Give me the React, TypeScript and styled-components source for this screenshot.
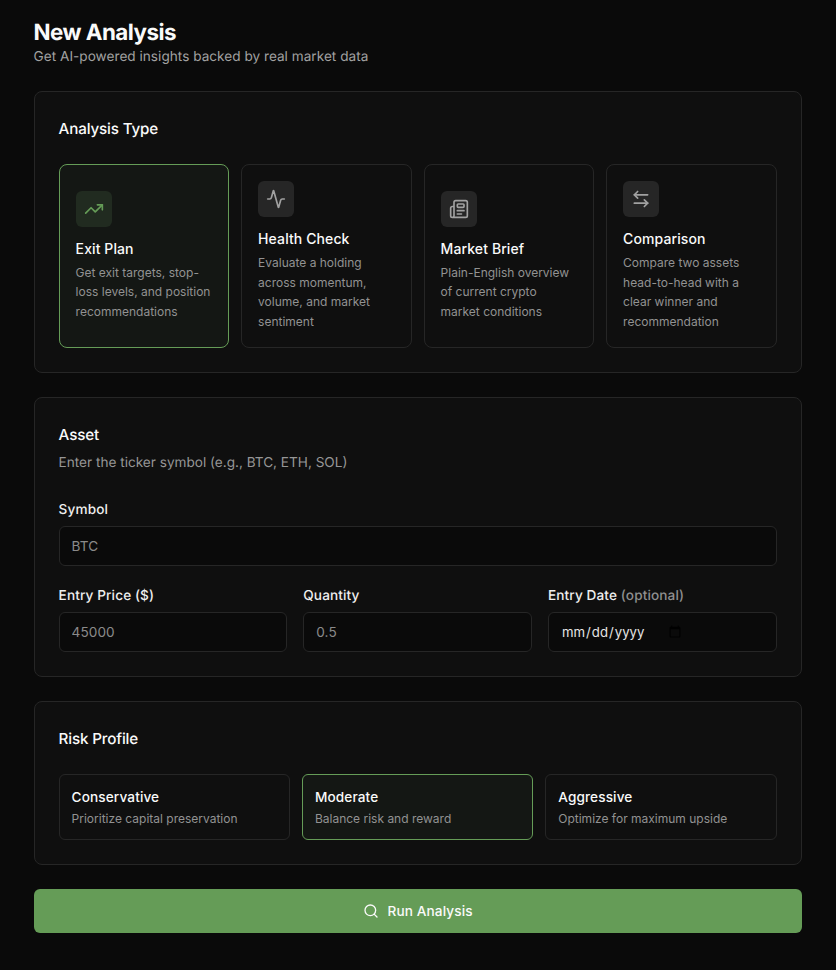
import React, { useState } from 'react';
import styled, { createGlobalStyle } from 'styled-components';
import { TrendingUp, Activity, Newspaper, ArrowLeftRight, Search } from 'lucide-react';

const GlobalStyle = createGlobalStyle`
  * { box-sizing: border-box; }
  html, body { margin: 0; background: #0a0a0a; }
  body {
    font-family: Inter, "Noto Sans", sans-serif;
    color: #fafafa;
    -webkit-font-smoothing: antialiased;
    text-rendering: geometricPrecision;
  }
`;

const Page = styled.main`
  padding: 19px 34.4px 37px 33.6px;
  display: flex;
  flex-direction: column;
  gap: 24px;
`;

const Header = styled.header`
  display: flex;
  flex-direction: column;
  gap: 1px;
`;

const Title = styled.h1`
  margin: 0;
  font-size: 22.4px;
  line-height: 28px;
  font-weight: 700;
  letter-spacing: -0.56px;
  color: #fafafa;
`;

const Subtitle = styled.p`
  margin: 0;
  font-size: 13.6px;
  line-height: 19px;
  letter-spacing: 0.02px;
  color: #a1a1a1;
`;

const Panel = styled.section`
  background: #0f0f0f;
  border: 1px solid #262626;
  border-radius: 8px;
  padding: 24px;
`;

const PanelTitle = styled.h2`
  margin: 0 0 -2px;
  font-size: 15.2px;
  line-height: 25px;
  font-weight: 500;
  letter-spacing: -0.15px;
  color: #fafafa;
  padding-bottom: 1px;
`;

const PanelHint = styled.p`
  margin: 7px 0 -1px;
  font-size: 13.6px;
  line-height: 20px;
  color: #969696;
`;

const TypeGrid = styled.div`
  margin-top: 24px;
  display: grid;
  grid-template-columns: repeat(4, 1fr);
  gap: 12px;
`;

const TypeCard = styled.button<{ $active?: boolean }>`
  display: flex;
  flex-direction: column;
  justify-content: center;
  align-items: flex-start;
  height: 184px;
  padding: 16px;
  text-align: left;
  font-family: inherit;
  cursor: pointer;
  border-radius: 8px;
  border: 1px solid ${(p) => (p.$active ? '#659c57' : '#262626')};
  background: ${(p) => (p.$active ? '#141714' : 'transparent')};
`;

const IconBox = styled.span<{ $active?: boolean }>`
  width: 36px;
  height: 36px;
  border-radius: 6px;
  display: flex;
  align-items: center;
  justify-content: center;
  margin-bottom: 12px;
  background: ${(p) => (p.$active ? '#212b20' : '#262626')};
  color: ${(p) => (p.$active ? '#659c57' : '#a1a1a1')};
`;

const CardTitle = styled.span`
  font-size: 14px;
  line-height: 20px;
  font-weight: 500;
  letter-spacing: 0.1px;
  color: #fafafa;
`;

const CardText = styled.span`
  margin-top: 4px;
  font-size: 12px;
  line-height: 19.5px;
  color: #929292;
`;

const FieldRow = styled.div`
  margin-top: 19px;
  display: grid;
  grid-template-columns: repeat(3, 1fr);
  gap: 16px;
`;

const Field = styled.label<{ $top?: boolean }>`
  display: flex;
  flex-direction: column;
  gap: 5px;
  margin-top: ${(p) => (p.$top ? '27px' : '0')};
`;

const FieldLabel = styled.span`
  font-size: 13.6px;
  line-height: 22px;
  font-weight: 450;
  letter-spacing: 0.12px;
  color: #f0f0f0;
`;

const Optional = styled.span`
  color: #8f8f8f;
`;

const Input = styled.input`
  width: 100%;
  height: 40px;
  padding: 0 12px;
  font-family: inherit;
  font-size: 13.6px;
  letter-spacing: 0.08px;
  color: #e5e5e5;
  background: #0a0a0a;
  border: 1px solid #262626;
  border-radius: 6px;
  outline: none;
  &::placeholder { color: #8a8a8a; }
  &[type='date'] { font-size: 13.2px; letter-spacing: 0; }
  &::-webkit-calendar-picker-indicator { margin-right: 80px; }
`;

const RiskGrid = styled.div`
  margin-top: 24px;
  display: grid;
  grid-template-columns: repeat(3, 1fr);
  gap: 12px;
`;

const RiskCard = styled.button<{ $active?: boolean }>`
  display: flex;
  flex-direction: column;
  align-items: flex-start;
  height: 66px;
  padding: 12px;
  font-family: inherit;
  text-align: left;
  cursor: pointer;
  border-radius: 6px;
  border: 1px solid ${(p) => (p.$active ? '#659c57' : '#262626')};
  background: ${(p) => (p.$active ? '#141714' : 'transparent')};
`;

const RiskName = styled.span`
  font-size: 13.6px;
  line-height: 20px;
  font-weight: 450;
  letter-spacing: 0.12px;
  color: #fafafa;
`;

const RiskText = styled.span`
  font-size: 12px;
  line-height: 16px;
  margin-top: 4px;
  color: #929292;
`;

const RunButton = styled.button`
  height: 44px;
  border: none;
  border-radius: 6px;
  display: flex;
  align-items: center;
  justify-content: center;
  gap: 9px;
  font-family: inherit;
  font-size: 13.6px;
  font-weight: 450;
  letter-spacing: 0.12px;
  color: #fafafa;
  background: #659c57;
  cursor: pointer;
`;

const types = [
  { id: 'exit', name: 'Exit Plan', text: 'Get exit targets, stop-loss levels, and position recommendations', icon: TrendingUp },
  { id: 'health', name: 'Health Check', text: 'Evaluate a holding across momentum, volume, and market sentiment', icon: Activity },
  { id: 'brief', name: 'Market Brief', text: 'Plain-English overview of current crypto market conditions', icon: Newspaper },
  { id: 'compare', name: 'Comparison', text: 'Compare two assets head-to-head with a clear winner and recommendation', icon: ArrowLeftRight },
];

const risks = [
  { id: 'conservative', name: 'Conservative', text: 'Prioritize capital preservation' },
  { id: 'moderate', name: 'Moderate', text: 'Balance risk and reward' },
  { id: 'aggressive', name: 'Aggressive', text: 'Optimize for maximum upside' },
];

export default function App() {
  const [type, setType] = useState('exit');
  const [risk, setRisk] = useState('moderate');

  return (
    <Page>
      <GlobalStyle />
      <Header>
        <Title>New Analysis</Title>
        <Subtitle>Get AI-powered insights backed by real market data</Subtitle>
      </Header>

      <Panel>
        <PanelTitle>Analysis Type</PanelTitle>
        <TypeGrid>
          {types.map((t) => (
            <TypeCard key={t.id} $active={type === t.id} onClick={() => setType(t.id)}>
              <IconBox $active={type === t.id}>
                <t.icon size={20} strokeWidth={2} />
              </IconBox>
              <CardTitle>{t.name}</CardTitle>
              <CardText>{t.text}</CardText>
            </TypeCard>
          ))}
        </TypeGrid>
      </Panel>

      <Panel>
        <PanelTitle>Asset</PanelTitle>
        <PanelHint>Enter the ticker symbol (e.g., BTC, ETH, SOL)</PanelHint>
        <Field $top>
          <FieldLabel>Symbol</FieldLabel>
          <Input placeholder="BTC" />
        </Field>
        <FieldRow>
          <Field>
            <FieldLabel>Entry Price ($)</FieldLabel>
            <Input placeholder="45000" />
          </Field>
          <Field>
            <FieldLabel>Quantity</FieldLabel>
            <Input placeholder="0.5" />
          </Field>
          <Field>
            <FieldLabel>Entry Date <Optional>(optional)</Optional></FieldLabel>
            <Input type="date" />
          </Field>
        </FieldRow>
      </Panel>

      <Panel>
        <PanelTitle>Risk Profile</PanelTitle>
        <RiskGrid>
          {risks.map((r) => (
            <RiskCard key={r.id} $active={risk === r.id} onClick={() => setRisk(r.id)}>
              <RiskName>{r.name}</RiskName>
              <RiskText>{r.text}</RiskText>
            </RiskCard>
          ))}
        </RiskGrid>
      </Panel>

      <RunButton>
        <Search size={16} strokeWidth={2} />
        Run Analysis
      </RunButton>
    </Page>
  );
}
